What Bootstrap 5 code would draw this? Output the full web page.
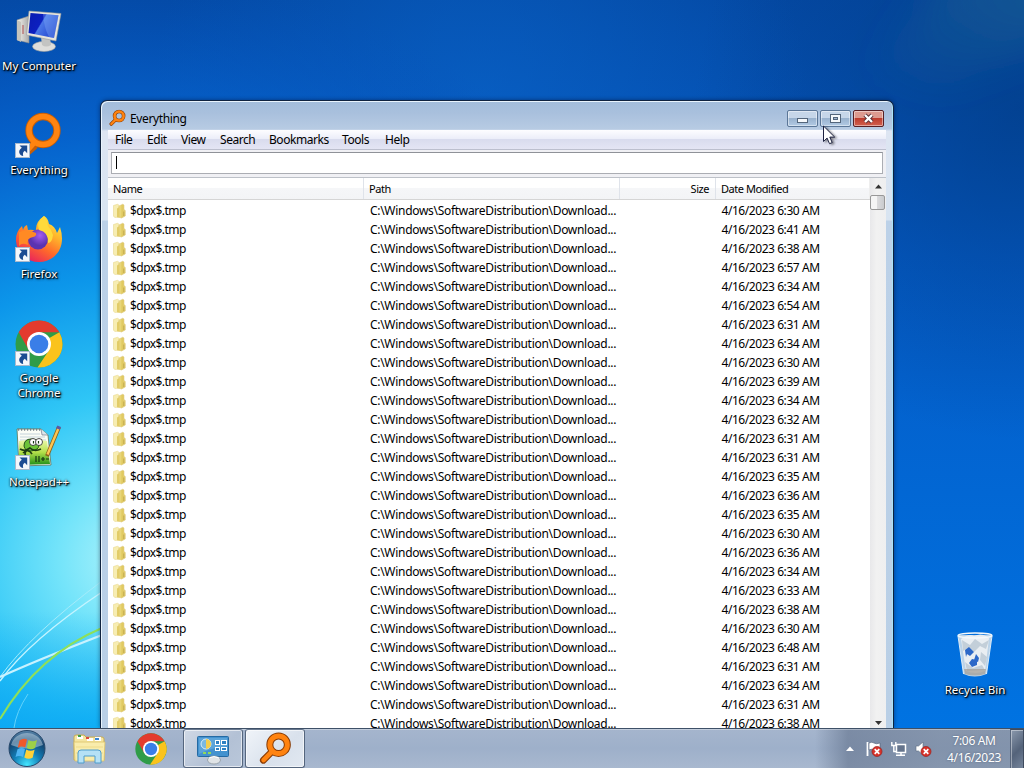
<!DOCTYPE html>
<html lang="en">
<head>
  <meta charset="UTF-8">
  <title>Everything</title>
  <link href="https://cdn.jsdelivr.net/npm/bootstrap@5.3.2/dist/css/bootstrap.min.css" rel="stylesheet">
  <style>
    body {
      width: 1024px;
      height: 768px;
      overflow: hidden;
      font-family: "Noto Sans", "Open Sans", sans-serif;
      font-size: 12px;
      line-height: 15px;
      color: #000;
      cursor: default;
    }
    .desktop { height: 728px; background: #0560c8; }
    .wallpaper { position: absolute; left: 0; top: 0; }

    /* desktop shortcuts */
    .shortcuts { position: absolute; left: 0; top: 8px; width: 78px; }
    .shortcut { height: 104px; color: #fff; text-align: center; }
    .shortcut span, .bin span {
      font-size: 11.5px;
      text-shadow: 1px 1px 1px #000, 1px 1px 3px #000, 0 0 2px rgba(0, 0, 0, .8);
      white-space: nowrap;
    }
    .shortcut svg { display: block; margin-bottom: 2px; overflow: visible; }
    .bin { position: absolute; left: 936px; top: 632px; width: 78px; color: #fff; text-align: center; }

    /* application window */
    .win {
      position: absolute;
      left: 100px;
      top: 100px;
      width: 794px;
      height: 628px;
      padding: 0 7px;
      border: 1px solid #10233f;
      border-bottom: 0;
      border-radius: 7px 7px 0 0;
      background: linear-gradient(180deg, #a3bddb 0, #a9c0dd 12px, #b7cbe3 28px, #dde5f2 30px, #d8e4f1 119px, #bcd1e8 120px, #b9cfe6 100%);
      box-shadow: inset 1px 1px 0 #e9f4fd, inset -1px 0 0 #a9e2f8, 0 0 4px rgba(0, 0, 30, .45);
      overflow: hidden;
    }
    .titlebar { height: 29px; padding: 6px 2px 0 1px; }
    .caption { letter-spacing: -.38px; padding: 4px 0 0 4px; }
    .capbtns { gap: 2px; padding-top: 3px; }
    .capbtn {
      width: 31px;
      height: 17px;
      border: 1px solid #5b7697;
      border-radius: 2px;
      background: linear-gradient(#c6d6e9 45%, #99b2ce 50%, #b2cae4);
      box-shadow: inset 0 0 0 1px rgba(255, 255, 255, .45);
    }
    .capbtn.shut { border-color: #571f24; background: linear-gradient(#dd9a8f 45%, #bd3c2d 50%, #d2614f); }
    .capbtn svg, .arrowbox svg { display: block; }
    .menubar { height: 20px; background: linear-gradient(#fdfdff, #eceef9 45%, #d9dcee 50%, #e4e5f4); border-bottom: 1px solid #bcbfce; padding-left: 7px; letter-spacing: -.45px; }
    .menubar span { line-height: 20px; }
    .menubar span:nth-child(1) { width: 32px; }
    .menubar span:nth-child(2) { width: 34px; }
    .menubar span:nth-child(3) { width: 39px; }
    .menubar span:nth-child(4) { width: 49px; }
    .menubar span:nth-child(5) { width: 73px; }
    .menubar span:nth-child(6) { width: 43px; }
    .searchbar { height: 28px; background: #f0f0f4; padding: 2px 3px 5px; border-bottom: 1px solid #bdc1c8; }
    .searchbox { height: 22px; background: #fff; border: 1px solid #abadb3; border-top-color: #8f9298; padding: 3px 0 0 4px; }
    .caret { width: 1px; height: 13px; background: #000; }
    .listing { background: #fff; height: 551px; }
    .colhead { height: 22px; background: linear-gradient(#fff 45%, #f5f6f8 50%, #f3f4f6); border-bottom: 1px solid #d5d5d5; font-size: 11px; line-height: 22px; letter-spacing: -.45px; }
    .colhead > div { border-right: 1px solid #dfe3ea; padding-left: 5px; }
    .colhead > div:last-child { border-right-color: #eee; }
    .colhead .c-size { padding-right: 6px; }
    .c-name { width: 256px; }
    .c-path { width: 256px; }
    .c-size { width: 96px; }
    .c-date { width: 154px; }
    .filerow { height: 19px; line-height: 18px; }
    .filerow svg { margin: 1px 3px 0 4px; }
    .filerow .c-name { letter-spacing: -.55px; }
    .filerow .c-path { padding-left: 6px; letter-spacing: -.3px; }
    .filerow .c-date { padding-left: 5.5px; letter-spacing: -.44px; }
    .scroller { width: 16px; background: linear-gradient(90deg, #e8e8ea, #f1f1f1 40%, #efeff0); }
    .arrowbox { height: 17px; padding: 6px 0 0 5px; }
    .thumb { width: 15px; height: 15px; border: 1px solid #989898; border-radius: 2px; background: linear-gradient(90deg, #f5f5f5 45%, #dadadc 50%, #c9cbce); }
    .pointer { position: absolute; left: 822px; top: 125px; filter: drop-shadow(2px 1px 1px rgba(0, 0, 0, .45)); }

    /* taskbar */
    .taskbar {
      position: relative;
      height: 40px;
      border-top: 1px solid #3e5067;
      background:
        linear-gradient(90deg, transparent 815px, rgba(96, 112, 138, .6) 848px, rgba(112, 128, 152, .6) 940px, rgba(112, 128, 152, .6)),
        linear-gradient(#a5b5cd, #9eb0ca 50%, #a8b8cf);
      box-shadow: inset 0 1px 0 rgba(255, 255, 255, .35);
    }
    .orb { margin: 0 26px 0 7px; }
    .taskbtn { width: 60px; height: 39px; border: 1px solid #55667e; border-top-color: #67788f; border-radius: 3px; background: linear-gradient(135deg, #d0d9e6, #b3c1d5 60%, #b9c7da); box-shadow: inset 0 0 0 1px rgba(255, 255, 255, .6); }
    .taskbtn.active { background: linear-gradient(135deg, #f0f4f9, #d9e1ec 60%, #e1e8f1); }
    .clock { width: 72px; color: #fff; text-align: center; line-height: 17px; letter-spacing: -.35px; padding-top: 1px; text-shadow: 0 0 2px rgba(40, 55, 80, .5); }
    .peek { width: 14px; height: 40px; border: 1px solid #3f4b5e; border-left-color: #57657b; background: linear-gradient(135deg, #8b99ad, #54637a 55%, #75849a); box-shadow: inset 1px 1px 0 rgba(255, 255, 255, .4); }
  </style>
</head>
<body>
  <!-- shared drawings -->
  <svg width="0" height="0" class="position-absolute">
    <defs>
      <linearGradient id="screenBlue" x1="0" y1="0" x2="1" y2=".5">
        <stop offset="0" stop-color="#0a1bb0"/><stop offset=".48" stop-color="#0c20c0"/><stop offset=".52" stop-color="#4a78e8"/><stop offset="1" stop-color="#2548d0"/>
      </linearGradient>
      <linearGradient id="metal" x1="0" x2="1"><stop offset="0" stop-color="#f7f5ee"/><stop offset="1" stop-color="#a9aaa9"/></linearGradient>
      <linearGradient id="folderTan" x1="0" x2="1">
        <stop offset="0" stop-color="#f1e28f"/><stop offset=".5" stop-color="#e0c95f"/><stop offset="1" stop-color="#e6d27c"/>
      </linearGradient>
      <linearGradient id="foxFire" x1=".9" y1="0" x2=".3" y2="1">
        <stop offset="0" stop-color="#fff04a"/><stop offset=".35" stop-color="#ffb52b"/><stop offset=".65" stop-color="#ff6a2a"/><stop offset="1" stop-color="#e8205f"/>
      </linearGradient>
      <radialGradient id="foxGlobe" cx=".6" cy=".3"><stop offset="0" stop-color="#a45cf0"/><stop offset="1" stop-color="#5a33b0"/></radialGradient>
      <radialGradient id="orbBlue" cx=".5" cy=".95" r=".95">
        <stop offset="0" stop-color="#43e6ff"/><stop offset=".4" stop-color="#127fb8"/><stop offset=".75" stop-color="#14446f"/><stop offset="1" stop-color="#5c88ad"/>
      </radialGradient>
      <linearGradient id="grass" x1="0" y1="0" x2="0" y2="1"><stop offset="0" stop-color="#eef9b0"/><stop offset=".5" stop-color="#b4e04a"/><stop offset="1" stop-color="#1f8f17"/></linearGradient>
      <symbol id="lnk" viewBox="0 0 15 15">
        <rect x=".5" y=".5" width="14" height="14" fill="#f4f7fb" stroke="#a9b9cc"/>
        <path d="M4.500 2.500h7.700v7.700L9.800 7.800C8 9 7.600 10.500 8.200 13 5 12.500 2.800 9 5.200 6.200L6.800 4.800z" fill="#1b4b92"/>
      </symbol>
      <symbol id="chrome" viewBox="0 0 48 48">
        <circle cx="24" cy="24" r="23.500" fill="#2f9c48"/>
        <path d="M24 24 44.400 12.300A23.500 23.500 0 0 1 22.500 47.450L34.200 29.900z" fill="#fac31c"/>
        <path d="M3.650 12.250A23.500 23.500 0 0 1 44.350 12.250H24L13.800 29.900z" fill="#e33b2e"/>
        <circle cx="24" cy="24" r="12" fill="#fff"/>
        <circle cx="24" cy="24" r="9.300" fill="#3a7ee8"/>
      </symbol>
      <symbol id="loupe" viewBox="0 0 32 32">
        <path d="M11.300 20.300 4.200 27.400" stroke="#8a3d06" stroke-width="6.600" stroke-linecap="round"/>
        <circle cx="19" cy="12.300" r="8.500" fill="none" stroke="#8a3d06" stroke-width="6.800"/>
        <path d="M12.500 19 4.400 27.200" stroke="#ff8310" stroke-width="4.400" stroke-linecap="round"/>
        <circle cx="19" cy="12.300" r="8.500" fill="none" stroke="#ff8310" stroke-width="4.800"/>
      </symbol>
      <symbol id="folder" viewBox="0 0 15 16">
        <path d="M1.500 2.500 5.500 1.300l1.500.9V14L3 14.500 1.500 13.300z" fill="#f7edb2" stroke="#ead98f" stroke-width=".6"/>
        <path d="M7 3 10.800 1.200l1.200.8v4.500l1.300 1V13l-3.800 2-2.500-.8z" fill="url(#folderTan)" stroke="#d9c370" stroke-width=".5"/>
        <path d="M5 5.500 7.500 4v10.800L5 14.200z" fill="#e2cc68"/>
        <path d="M11.800 8.500V13" stroke="#bfa84c"/>
      </symbol>
    </defs>
  </svg>

  <div class="desktop position-relative overflow-hidden">
    <svg class="wallpaper" width="1024" height="728" viewBox="0 0 1024 728">
      <defs>
        <linearGradient id="baseSky" x1="0" y1="0" x2="0" y2="1"><stop offset="0" stop-color="#0449a4"/><stop offset=".35" stop-color="#045bc6"/><stop offset="1" stop-color="#0073e2"/></linearGradient>
        <radialGradient id="leftGlow" gradientUnits="userSpaceOnUse" cx="130" cy="560" r="590">
          <stop offset="0" stop-color="#aef3fb"/><stop offset=".12" stop-color="#74e4fa"/><stop offset=".28" stop-color="#2fc6f6"/><stop offset=".48" stop-color="#0c96ea"/><stop offset=".72" stop-color="#0667d2" stop-opacity=".8"/><stop offset="1" stop-color="#0552bc" stop-opacity="0"/>
        </radialGradient>
        <radialGradient id="cornerDark" gradientUnits="userSpaceOnUse" cx="1024" cy="110" r="330">
          <stop offset="0" stop-color="#023b84" stop-opacity=".7"/><stop offset="1" stop-color="#023b84" stop-opacity="0"/>
        </radialGradient>
        <radialGradient id="topGlow" gradientUnits="userSpaceOnUse" cx="480" cy="110" r="330">
          <stop offset="0" stop-color="#0a66cc" stop-opacity=".6"/><stop offset="1" stop-color="#0a66cc" stop-opacity="0"/>
        </radialGradient>
        <linearGradient id="lowBlue" x1="0" y1="0" x2="0" y2="1"><stop offset=".84" stop-color="#06a6f4" stop-opacity="0"/><stop offset="1" stop-color="#06a6f4" stop-opacity=".75"/></linearGradient>
        <linearGradient id="ray" x1="0" y1="1" x2="1" y2="0"><stop offset="0" stop-color="#2a7090" stop-opacity="0"/><stop offset="1" stop-color="#2a7090" stop-opacity=".5"/></linearGradient>
        <filter id="soft" x="-.3" y="-.3" width="1.600" height="1.600"><feGaussianBlur stdDeviation="18"/></filter>
        <filter id="thin"><feGaussianBlur stdDeviation=".6"/></filter>
      </defs>
      <rect width="1024" height="728" fill="url(#baseSky)"/>
      <rect width="1024" height="728" fill="url(#topGlow)"/>
      <rect width="1024" height="728" fill="url(#cornerDark)"/>
      <path d="M870 70 950-30h120v60l-130 60z" fill="url(#ray)" filter="url(#soft)"/>
      <rect width="1024" height="728" fill="url(#leftGlow)"/>
      <rect width="120" height="728" fill="url(#lowBlue)"/>
      <g fill="none" filter="url(#thin)">
        <path d="M0 677Q30 635 102 581" stroke="#a5ebfa" stroke-width="1"/>
        <path d="M0 681Q30 640 102 592" stroke="#c5f4ff" stroke-width="1.400"/>
        <path d="M0 677Q35 661 102 635" stroke="#c8f2ff" stroke-width="2.400"/>
        <path d="M0 719Q38 655 102 628" stroke="#8fe058" stroke-width="2"/>
        <path d="M14 728Q16 712 28 694" stroke="#62d2fa" stroke-width="1"/>
      </g>
    </svg>

    <!-- Shortcuts -->
    <div class="shortcuts d-flex flex-column">
      <div class="shortcut d-flex flex-column align-items-center">
        <svg width="48" height="48" viewBox="0 0 48 48">
          <path d="M2 12 14 8v27L2 32z" fill="url(#metal)" stroke="#8d8f90" stroke-width=".6"/>
          <path d="M2 12 6 14v20l-4-2z" fill="#c5c4bd"/>
          <path d="M8 17v9" stroke="#b05050"/>
          <ellipse cx="29" cy="38.500" rx="11.500" ry="5" fill="#dededb" stroke="#9c9fa0" stroke-width=".6"/>
          <path d="M26 29h9l1 8q-5 3-9 0z" fill="#c3c4c2"/>
          <path d="M14 3 46 5.500 41 33 11.500 27z" fill="#e7e5dc" stroke="#96999c" stroke-width=".6"/>
          <path d="M15.500 5 43.500 7.200 39 30 13.500 25z" fill="url(#screenBlue)"/>
          <path d="M28 6 43.500 7.200 39 30 34 29q-5-9-6-23z" fill="#88b2fa" opacity=".35"/>
        </svg>
        <span>My Computer</span>
      </div>
      <div class="shortcut d-flex flex-column align-items-center">
        <svg width="48" height="48" viewBox="0 0 48 48">
          <path d="M20 33 12 40" stroke="#c65d06" stroke-width="8"/>
          <circle cx="28" cy="18.500" r="14" fill="none" stroke="#c65d06" stroke-width="7.400"/>
          <circle cx="28" cy="18.500" r="14" fill="none" stroke="#ff8410" stroke-width="5.600"/>
          <path d="M20 30 11 40" stroke="#ff8410" stroke-width="5"/>
          <use href="#lnk" x="0" y="31" width="15" height="15"/>
        </svg>
        <span>Everything</span>
      </div>
      <div class="shortcut d-flex flex-column align-items-center">
        <svg width="48" height="48" viewBox="0 0 48 48">
          <path d="M29 0q4 2 5 8 6 2 8 9l3-6q3 9 1.500 17A23 22 0 0 1 24 46 23 22 0 0 1 1 25q-.5-9 6-15l1 4q1-4 4-5l1 5q4-1 8 1-1-9 8-15z" fill="url(#foxFire)"/>
          <circle cx="23" cy="23.500" r="10" fill="url(#foxGlobe)"/>
          <path d="M4 16q9-3 17 1 1 3-3 4-7 1-5 8-6-3-9 1z" fill="#ff8a24"/>
          <path d="M29 0q-8 6-5 14 10 2 9 13 4 0 5-8-2-6-5-9-1-7-4-10z" fill="#ffda3b"/>
          <use href="#lnk" x="0" y="31" width="15" height="15"/>
        </svg>
        <span>Firefox</span>
      </div>
      <div class="shortcut d-flex flex-column align-items-center">
        <svg width="48" height="48" viewBox="0 0 48 48">
          <use href="#chrome" width="48" height="48"/>
          <use href="#lnk" x="0" y="31" width="15" height="15"/>
        </svg>
        <span>Google<br>Chrome</span>
      </div>
      <div class="shortcut d-flex flex-column align-items-center">
        <svg width="48" height="48" viewBox="0 0 48 48">
          <path d="M2 5h24l7 6 3 30-32 1z" fill="#fbfdf6" stroke="#5f7453" stroke-width=".8"/>
          <path d="M5 10h20M5 13h25M5 16h26" stroke="#b9c8d6" stroke-width=".8"/>
          <path d="M4 17q15-3 28 0l3 23-31 1z" fill="url(#grass)"/>
          <path d="M3 5.500h23" stroke="#7a8590" stroke-width="2.600" stroke-dasharray="1.200 1.800"/>
          <path d="m26 5 1 6h6" fill="#dce5ea" stroke="#667" stroke-width=".6"/>
          <path d="M9 22q0-7 7-7 8 0 8 6 0 5-8 6-6 0-7-5z" fill="#6cc238" stroke="#21551a"/>
          <path d="M5 25q5 3 10-1 4 4 11 1M8 29q5-5 9 1M12 33q-4-3 0-7" fill="none" stroke="#1d3b12" stroke-width="1.700"/>
          <circle cx="18" cy="18" r="3.500" fill="#fff" stroke="#222" stroke-width=".8"/><circle cx="24" cy="18" r="3.500" fill="#fff" stroke="#222" stroke-width=".8"/>
          <path d="M18.500 17v2.500M23.500 17v2.500M21 32v6M24 32v6M26 35h4M28 33v4M31 35h3" stroke="#173812" stroke-width="1.200"/>
          <path d="M44 3 32 32" stroke="#8a6018" stroke-width="4"/>
          <path d="M43.600 4 32.500 30.500" stroke="#ffc552" stroke-width="2.400"/>
          <path d="m43 5 1.200-2.800" stroke="#5c59a5" stroke-width="4"/>
          <use href="#lnk" x="0" y="31" width="15" height="15"/>
        </svg>
        <span>Notepad++</span>
      </div>
    </div>

    <div class="bin d-flex flex-column align-items-center">
      <svg width="48" height="50" viewBox="0 0 48 50">
        <path d="M7 3 12.500 42q11 5 23 0L41 3z" fill="#c9dae8" opacity=".93"/>
        <path d="M10 7q8-6 13-3 8-4 15 2l-4 33q-9 4-19 0z" fill="#e9eef2"/>
        <path d="m11 8 8 5 5-6 7 5 7-4-3 9-6-3-6 6-6-4-5 3zM30 20l6 5-2 9-5-6zM14 30l8 6 9-3 3 5-18 1z" fill="#c3cfd9"/>
        <path d="m13 37 22 0-1 5q-10 3-20 0z" fill="#a39f98" opacity=".75"/>
        <path d="m14 18 4-3 5 5-4 4-3-2-1 3zM25 22l3 4-1 4-4-2zM18 31l3-4 5 1v5l-5 2z" fill="#2c68c8"/>
        <ellipse cx="24" cy="3.500" rx="17" ry="2.500" fill="none" stroke="#f3f8fb" stroke-width="1.300"/>
        <path d="M7 4 12.500 42M41 4 35.500 42" stroke="#eef6fb" stroke-width=".9"/>
      </svg>
      <span>Recycle Bin</span>
    </div>

    <!-- Window -->
    <div class="win d-flex flex-column">
      <div class="titlebar d-flex flex-shrink-0">
        <svg width="17" height="18" viewBox="0 0 32 32" style="margin-top:2px"><use href="#loupe"/></svg>
        <div class="caption flex-grow-1">Everything</div>
        <div class="capbtns d-flex">
          <div class="capbtn"><svg width="29" height="15"><rect x="9.500" y="7.500" width="10" height="4" fill="#f5f8fb" stroke="#53657b"/></svg></div>
          <div class="capbtn"><svg width="29" height="15"><rect x="9.500" y="3.500" width="10" height="8" fill="#f5f8fb" stroke="#53657b"/><rect x="12.500" y="6.500" width="4" height="2" fill="#9fb5cf" stroke="#53657b"/></svg></div>
          <div class="capbtn shut"><svg width="29" height="15"><path d="m11 4 7 7M18 4l-7 7" stroke="#5d3338" stroke-width="4.200"/><path d="m11 4 7 7M18 4l-7 7" stroke="#fff" stroke-width="2.300"/></svg></div>
        </div>
      </div>
      <div class="menubar d-flex flex-shrink-0">
        <span>File</span>
        <span>Edit</span>
        <span>View</span>
        <span>Search</span>
        <span>Bookmarks</span>
        <span>Tools</span>
        <span>Help</span>
      </div>
      <div class="searchbar flex-shrink-0">
        <div class="searchbox"><div class="caret"></div></div>
      </div>
      <div class="listing d-flex flex-shrink-0">
        <div class="flex-grow-1">
          <div class="colhead d-flex">
            <div class="c-name">Name</div>
            <div class="c-path">Path</div>
            <div class="c-size text-end">Size</div>
            <div class="c-date">Date Modified</div>
          </div>
          <div id="files" style="padding-top:2px"></div>
        </div>
        <div class="scroller d-flex flex-column">
          <div class="arrowbox"><svg width="7" height="5"><path d="M0 4.500 3.500.5 7 4.500z" fill="#333"/></svg></div>
          <div class="thumb"></div>
          <div class="arrowbox mt-auto pt-2"><svg width="7" height="5"><path d="M0 1h7L3.500 5z" fill="#333"/></svg></div>
        </div>
      </div>
    </div>

    <svg class="pointer" width="14" height="21" viewBox="0 0 14 21">
      <path d="M1.500 1v15.500l3.600-3.400 2.400 5.600 2.700-1.100-2.400-5.500h4.900z" fill="#fff" stroke="#1d2140"/>
    </svg>
  </div>

  <!-- Taskbar -->
  <div class="taskbar d-flex align-items-center">
    <svg class="orb" width="40" height="39" viewBox="0 0 40 39">
      <circle cx="20" cy="19.500" r="18" fill="url(#orbBlue)" stroke="#27486a"/>
      <path d="M4 16a16.500 16 0 0 1 32 0q-16 7-32 0z" fill="#d6e9f5" opacity=".45"/>
      <path d="M12.500 11.500q4-3 7.500-1l-1.800 8q-4-2-7.500.5z" fill="#f0592a"/>
      <path d="M21.500 11q4 2.500 8.500 0l-2 8q-4 2.500-8.300 0z" fill="#9cd048"/>
      <path d="M10.500 20.300q4-2.300 7.500-.3l-2 8q-4-2-7.500 0z" fill="#4db3f2"/>
      <path d="M19.300 20.500q4 2.500 8.300.2l-2 8q-4 2.300-8.300-.2z" fill="#ffd138"/>
    </svg>
    <svg width="33" height="31" viewBox="0 0 33 31">
      <path d="M1 4q0-2 2-2h8l2 2h16q2 0 2 2v21H1z" fill="#f5e5a0" stroke="#c6ab55"/>
      <path d="M4 3h6v3H4zM14 5h6v3h-6zM22 4h6v4h-6z" fill="#fff"/>
      <path d="M5 2h3v2H5z" fill="#3fa046"/><path d="M13 4h3v2h-3z" fill="#d94a3b"/><path d="M22 5h4v2h-4z" fill="#3a86d3"/>
      <path d="M1 9h31l-1 19H2z" fill="#f9ecac" stroke="#dcc36a" stroke-width=".8"/>
      <path d="M3 14h27M3 20h27" stroke="#eedb8a"/>
      <path d="M5 30V20q0-3 3-3h17q3 0 3 3v10h-6v-7H11v7z" fill="#b5e1f6" stroke="#4f9dcc"/>
    </svg>
    <svg width="32" height="32" style="margin-left:29px"><use href="#chrome" width="32" height="32"/></svg>
    <div class="taskbtn d-flex align-items-center justify-content-center" style="margin-left:16px">
      <svg width="34" height="32" viewBox="0 0 34 32">
        <rect x="1.500" y="3.500" width="31" height="20" rx="1" fill="#4392cf" stroke="#246aa3"/>
        <path d="M3 5h28v8q-14 1-28 8z" fill="#7cbae4" opacity=".45"/>
        <circle cx="10" cy="11" r="5" fill="#79b9e2" stroke="#d7edf9"/><path d="M10 11V6a5 5 0 0 1 0 10z" fill="#f3ce4d"/>
        <rect x="19.500" y="7.500" width="4" height="4" fill="#2d80c2" stroke="#fff"/><rect x="25.500" y="7.500" width="5" height="4" fill="#2d80c2" stroke="#fff"/>
        <rect x="19.500" y="14.500" width="4" height="3" fill="#2d80c2" stroke="#fff"/><rect x="25.500" y="14.500" width="5" height="3" fill="#2d80c2" stroke="#fff"/>
        <path d="M7 20h3M12 20h3" stroke="#90d85c" stroke-width="2"/>
        <ellipse cx="18" cy="27" rx="6.500" ry="4" fill="#dfe3e6" stroke="#8e989f" stroke-width=".8"/>
        <path d="M13 25q5-3 10 0" stroke="#fff" fill="none"/>
      </svg>
    </div>
    <div class="taskbtn active d-flex align-items-center justify-content-center" style="margin-left:2px">
      <svg width="33" height="33"><use href="#loupe" width="33" height="33"/></svg>
    </div>
    <div class="d-flex align-items-center ms-auto">
      <svg width="8" height="5" style="margin-right:12px"><path d="M0 5 4 0.500 8 5z" fill="#fff"/></svg>
      <svg width="17" height="16" viewBox="0 0 17 16" style="margin-right:8px">
        <path d="M1.500 1v14" stroke="#fff" stroke-width="1.800"/>
        <path d="M3 2q3-1.500 5 0t6 0v7q-3 1.500-6 0T3 9z" fill="#fff" stroke="#4d5c72" stroke-width=".6"/>
        <circle cx="11" cy="10.500" r="5" fill="#d8322a" stroke="#98211c" stroke-width=".7"/><path d="m8.700 8.200 4.600 4.600m0-4.600-4.600 4.600" stroke="#fff" stroke-width="1.700"/>
      </svg>
      <svg width="16" height="16" viewBox="0 0 16 16" style="margin-right:8px">
        <path d="M5.500 3.500h9v8h-9z" fill="#65748c" stroke="#fff" stroke-width="1.500"/>
        <path d="M5 14.200h9M10 12v2" stroke="#fff" stroke-width="1.500"/>
        <path d="M.8 1v3.500h4V1M2.800 4v6.500H5" fill="none" stroke="#fff" stroke-width="1.400"/>
      </svg>
      <svg width="17" height="16" viewBox="0 0 17 16" style="margin-right:6px">
        <path d="M1 5h2.500L8 1v13L3.500 10H1z" fill="#fff" stroke="#5c6b80" stroke-width=".6"/>
        <circle cx="11" cy="10.500" r="5" fill="#d8322a" stroke="#98211c" stroke-width=".7"/><path d="m8.700 8.200 4.600 4.600m0-4.600-4.600 4.600" stroke="#fff" stroke-width="1.700"/>
      </svg>
      <div class="clock">7:06 AM<br>4/16/2023</div>
      <div class="peek"></div>
    </div>
  </div>

  <script src="https://cdn.jsdelivr.net/npm/bootstrap@5.3.2/dist/js/bootstrap.bundle.min.js"></script>
  <script>
    // Modified time of each listed folder
    const times = ['6:30', '6:41', '6:38', '6:57', '6:34', '6:54', '6:31', '6:34', '6:30', '6:39',
      '6:34', '6:32', '6:31', '6:31', '6:35', '6:36', '6:35', '6:30', '6:36', '6:34',
      '6:33', '6:38', '6:30', '6:48', '6:31', '6:34', '6:31', '6:38'];

    document.getElementById('files').innerHTML = times.map(t => `
      <div class="filerow d-flex">
        <div class="c-name d-flex"><svg width="15" height="16"><use href="#folder"/></svg>$dpx$.tmp</div>
        <div class="c-path">C:\\Windows\\SoftwareDistribution\\Download...</div>
        <div class="c-size"></div>
        <div class="c-date">4/16/2023 ${t} AM</div>
      </div>`).join('');
  </script>
</body>
</html>
